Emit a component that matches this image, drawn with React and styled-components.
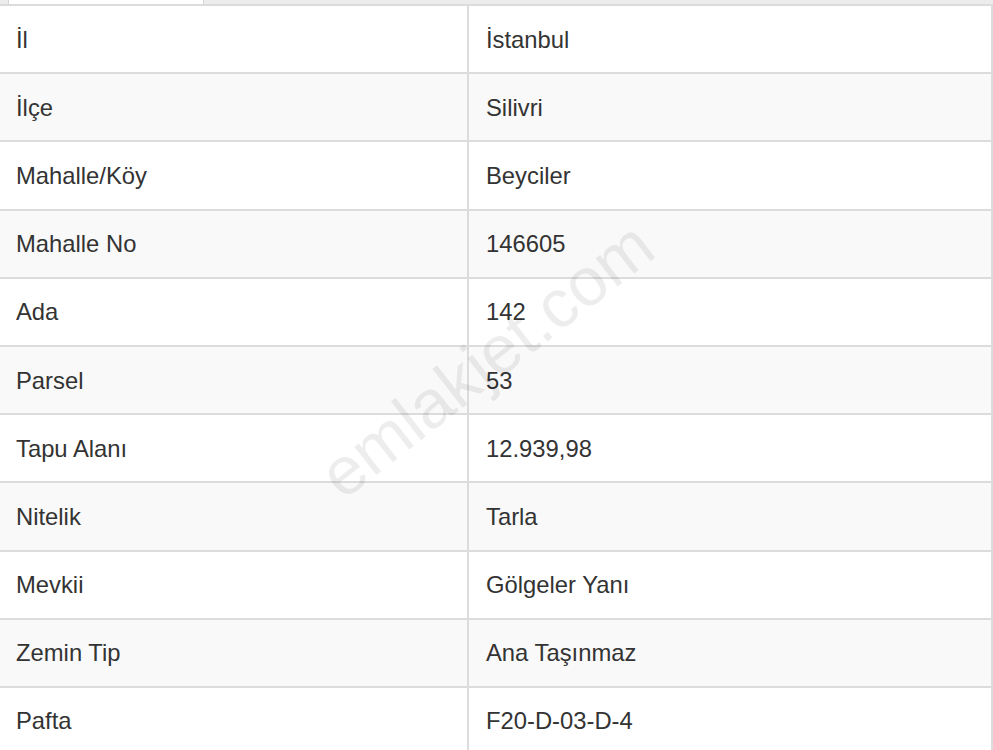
import React from "react";
import styled, { createGlobalStyle } from "styled-components";

const GlobalStyle = createGlobalStyle`
  html, body { margin: 0; padding: 0; background: #fff; }
  body { font-family: "Liberation Sans", Arial, sans-serif; overflow: hidden; }
`;

const Page = styled.div`
  position: relative;
  width: 993px;
  height: 750px;
  overflow: hidden;
  background: #fff;
`;

const TabBar = styled.div`
  display: flex;
  height: 4px;
  background: #ececec;
  padding-left: 8px;
`;

const Tab = styled.div`
  width: 194px;
  background: #fff;
  border-left: 1px solid #d6d6d6;
  border-right: 1px solid #d6d6d6;
`;

const Table = styled.table`
  width: 993px;
  border-collapse: collapse;
  border-top: 2px solid #dcdcdc;
  border-right: 2px solid #dcdcdc;
  table-layout: fixed;
`;

const Row = styled.tr`
  background: ${(p) => (p.$striped ? "#f9f9f9" : "#fff")};
  border-bottom: 2px solid #dcdcdc;
`;

const Cell = styled.td`
  height: 68.2px;
  padding: 1px 16px 0 ${(p) => (p.$divider ? "17px" : "16px")};
  font-size: 23.8px;
  color: #333;
  vertical-align: middle;
  box-sizing: border-box;
  border-left: ${(p) => (p.$divider ? "2px solid #dcdcdc" : "none")};
  width: ${(p) => (p.$divider ? "auto" : "468px")};
`;

const Watermark = styled.div`
  position: absolute;
  left: 486px;
  top: 359px;
  transform: translate(-50%, -50%) rotate(-38deg);
  font-family: "Liberation Sans", Arial, sans-serif;
  font-size: 68px;
  color: rgba(0, 0, 0, 0.07);
  white-space: nowrap;
  pointer-events: none;
`;

const rows = [
  ["İl", "İstanbul"],
  ["İlçe", "Silivri"],
  ["Mahalle/Köy", "Beyciler"],
  ["Mahalle No", "146605"],
  ["Ada", "142"],
  ["Parsel", "53"],
  ["Tapu Alanı", "12.939,98"],
  ["Nitelik", "Tarla"],
  ["Mevkii", "Gölgeler Yanı"],
  ["Zemin Tip", "Ana Taşınmaz"],
  ["Pafta", "F20-D-03-D-4"],
];

const App = () => {
  return (
    <>
      <GlobalStyle />
      <Page>
        <TabBar>
          <Tab />
        </TabBar>
        <Table>
          <tbody>
            {rows.map(([label, value], i) => (
              <Row key={label} $striped={i % 2 === 1}>
                <Cell>{label}</Cell>
                <Cell $divider>{value}</Cell>
              </Row>
            ))}
          </tbody>
        </Table>
        <Watermark>emlakjet.com</Watermark>
      </Page>
    </>
  );
};

export default App;
